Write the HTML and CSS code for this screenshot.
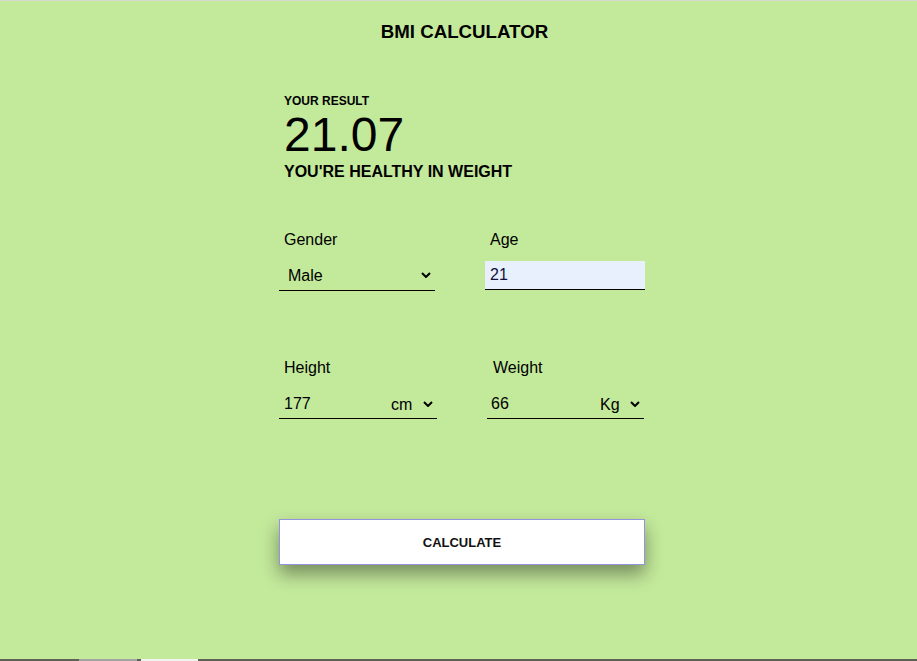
FILE: index.html
```html
<!DOCTYPE html>
<html lang="en">
<head>
<meta charset="utf-8">
<title>BMI Calculator</title>
<link rel="stylesheet" href="styles.css">
</head>
<body>
<main class="calc">
  <h1 class="title">BMI CALCULATOR</h1>

  <section class="result">
    <div class="result-label">YOUR RESULT</div>
    <div class="result-value">21.07</div>
    <div class="result-text">YOU'RE HEALTHY IN WEIGHT</div>
  </section>

  <div class="row row-one">
    <div class="col col-gender">
      <label class="label">Gender</label>
      <div class="field field-gender">
        <select class="select select-wide">
          <option>Male</option>
          <option>Female</option>
        </select>
        <svg class="chev" width="10" height="6" viewBox="0 0 10 6"><path d="M1 1 L5 5 L9 1" fill="none" stroke="#000" stroke-width="2"/></svg>
      </div>
    </div>
    <div class="col col-age">
      <label class="label">Age</label>
      <input class="age-input" type="text" value="21">
    </div>
  </div>

  <div class="row row-two">
    <div class="col col-height">
      <label class="label">Height</label>
      <div class="field field-unit">
        <input class="num-input" type="text" value="177">
        <select class="select unit"><option>cm</option><option>in</option></select>
        <svg class="chev" width="10" height="6" viewBox="0 0 10 6"><path d="M1 1 L5 5 L9 1" fill="none" stroke="#000" stroke-width="2"/></svg>
      </div>
    </div>
    <div class="col col-weight">
      <label class="label label-weight">Weight</label>
      <div class="field field-unit">
        <input class="num-input num-weight" type="text" value="66">
        <select class="select unit"><option>Kg</option><option>lb</option></select>
        <svg class="chev" width="10" height="6" viewBox="0 0 10 6"><path d="M1 1 L5 5 L9 1" fill="none" stroke="#000" stroke-width="2"/></svg>
      </div>
    </div>
  </div>

  <button class="calc-btn" type="button">CALCULATE</button>
</main>

<footer class="strip">
  <span class="strip-box strip-box-a"></span>
  <span class="strip-box strip-box-b"></span>
</footer>
</body>
</html>
```

FILE: styles.css
```css
html, body {
  margin: 0;
  padding: 0;
}

body {
  height: 661px;
  box-sizing: border-box;
  border-top: 1px solid #d6d9d2;
  background: #c3e99b;
  font-family: "Liberation Sans", Arial, sans-serif;
  color: #000;
  display: flex;
  flex-direction: column;
  overflow: hidden;
}

.calc {
  width: 366px;
  margin-left: 279px;
  display: flex;
  flex-direction: column;
}

.title {
  margin: 20px 0 0;
  padding-left: 5px;
  text-align: center;
  font-size: 18.7px;
  line-height: 22px;
  font-weight: bold;
}

.result {
  margin-top: 51px;
  padding-left: 5px;
  display: flex;
  flex-direction: column;
}

.result-label {
  font-size: 12px;
  line-height: 14px;
  font-weight: bold;
}

.result-value {
  margin-top: 3px;
  font-size: 48px;
  line-height: 48px;
}

.result-text {
  margin-top: 4px;
  font-size: 16px;
  line-height: 18px;
  font-weight: bold;
}

.row {
  display: flex;
  gap: 50px;
}

.row-one {
  margin-top: 50px;
}

.row-two {
  margin-top: 68px;
}

.col {
  display: flex;
  flex-direction: column;
}

.col-gender { width: 156px; }
.col-age { width: 160px; }
.col-height { width: 158px; }
.col-weight { width: 157px; }

.label {
  padding-left: 5px;
  font-size: 16px;
  line-height: 18px;
}

.label-weight {
  padding-left: 6px;
}

.field {
  display: flex;
  align-items: center;
  border-bottom: 1px solid #000;
  box-sizing: border-box;
}

.field-gender {
  margin-top: 11px;
  height: 31px;
  padding: 0 4px 0 9px;
}

.select {
  appearance: none;
  -webkit-appearance: none;
  border: 0;
  outline: 0;
  background: transparent;
  padding: 0;
  margin: 0;
  font-family: inherit;
  font-size: 16px;
  color: #000;
}

.select-wide {
  flex: 1;
  min-width: 0;
}

.chev {
  flex: none;
  display: block;
}

.age-input {
  margin-top: 12px;
  height: 29px;
  box-sizing: border-box;
  border: 0;
  border-bottom: 1px solid #000;
  background: #e8f0fe;
  padding: 0 0 0 5px;
  font-family: inherit;
  font-size: 16px;
  color: #10103a;
  outline: 0;
  width: 100%;
}

.field-unit {
  margin-top: 13px;
  height: 29px;
  padding-right: 4px;
}

.num-input {
  flex: 1;
  min-width: 0;
  border: 0;
  outline: 0;
  background: transparent;
  padding: 0 0 0 5px;
  margin: 0;
  font-family: inherit;
  font-size: 16px;
  color: #000;
}

.num-weight {
  padding-left: 4px;
}

.unit {
  margin-right: 10px;
}

.calc-btn {
  margin-top: 100px;
  height: 46px;
  width: 366px;
  background: #fff;
  border: 1px solid #9494dc;
  box-shadow: 0 9px 18px rgba(0, 0, 0, 0.4);
  font-family: inherit;
  font-size: 13px;
  line-height: 15px;
  font-weight: bold;
  color: #111;
  padding: 0;
}

.strip {
  margin-top: auto;
  height: 2px;
  background: #5e6158;
  display: flex;
  gap: 4px;
  padding-left: 79px;
}

.strip-box {
  width: 58px;
  height: 2px;
}

.strip-box-a {
  background: #a3a3a3;
}

.strip-box-b {
  width: 57px;
  background: #f2f2f2;
}
```
